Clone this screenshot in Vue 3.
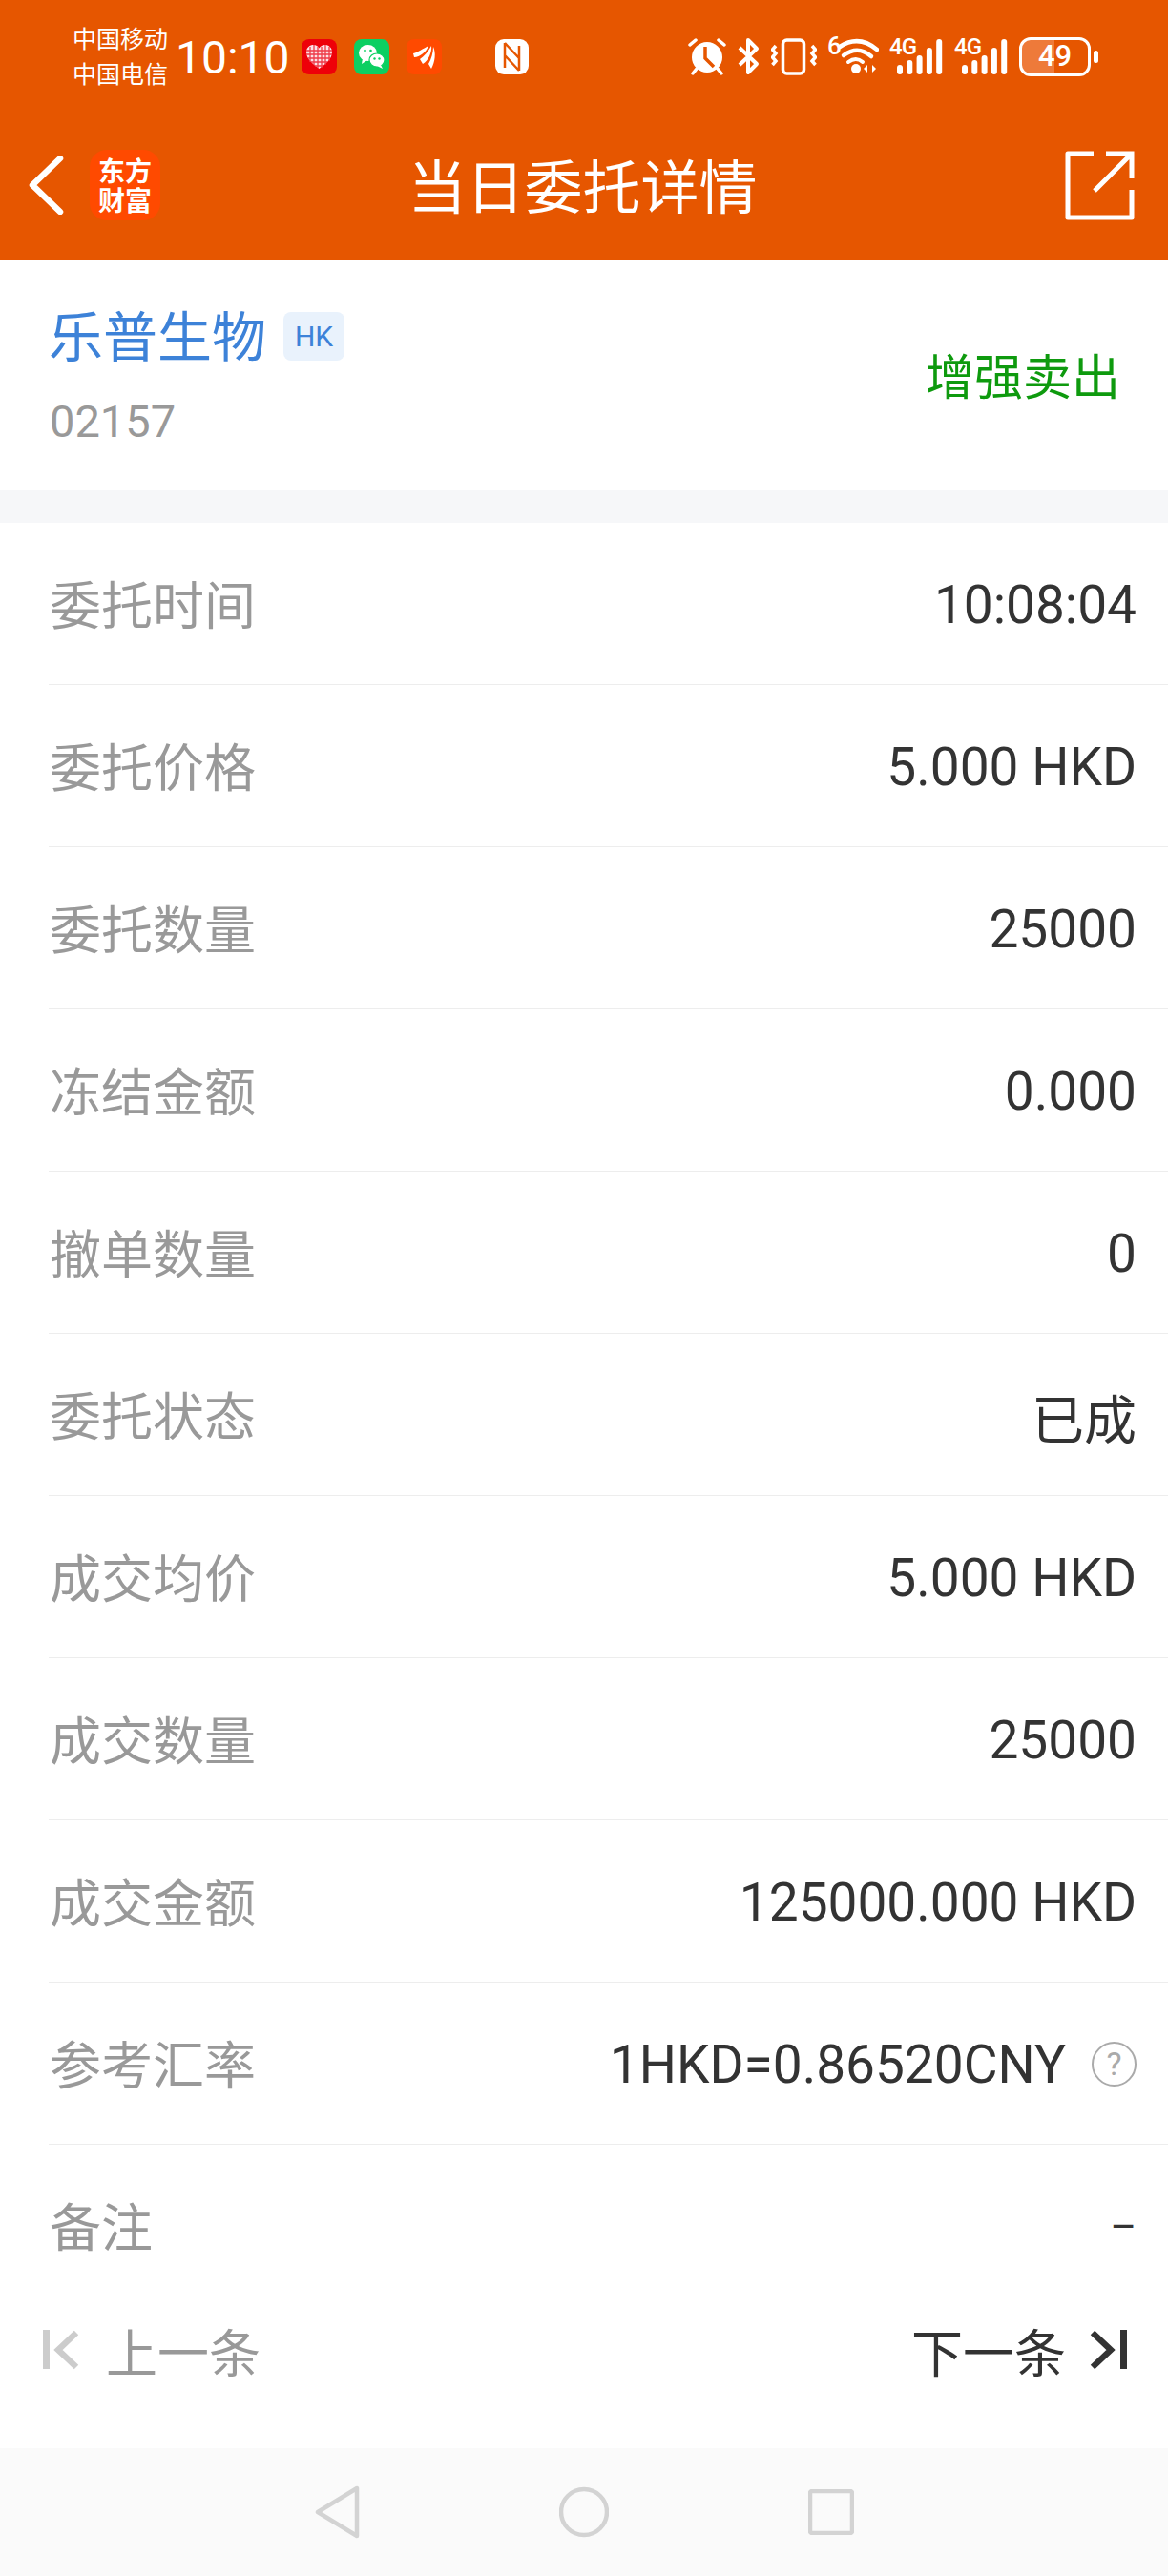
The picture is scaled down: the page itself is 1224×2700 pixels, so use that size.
<script setup>
const rows = [
  { label: '委托时间', value: '10:08:04' },
  { label: '委托价格', value: '5.000 HKD' },
  { label: '委托数量', value: '25000' },
  { label: '冻结金额', value: '0.000' },
  { label: '撤单数量', value: '0' },
  { label: '委托状态', value: '已成' },
  { label: '成交均价', value: '5.000 HKD' },
  { label: '成交数量', value: '25000' },
  { label: '成交金额', value: '125000.000 HKD' },
  { label: '参考汇率', value: '1HKD=0.86520CNY', help: true },
  { label: '备注', value: '–', dash: true }
]
const bars = [
  { x: 8, y: 29, h: 10 },
  { x: 18.3, y: 24, h: 15 },
  { x: 28.6, y: 19, h: 20 },
  { x: 38.9, y: 11, h: 28 },
  { x: 49.2, y: 2, h: 37 }
]
</script>

<template>
  <div class="page">
    <!-- 顶部橙色区域 -->
    <header class="top">
      <div class="status">
        <div class="carrier">
          <div>中国移动</div>
          <div>中国电信</div>
        </div>
        <div class="clock">10:10</div>

        <svg class="app-icon" width="37" height="37" viewBox="0 0 37 37">
          <rect width="37" height="37" rx="8" fill="#EE0009" />
          <path d="M18.5 31 C12 26 5 21 5 13.5 C5 8.5 9 6 12.5 6 C15 6 17.3 7.3 18.5 9.5 C19.7 7.3 22 6 24.500 6 C28 6 32 8.500 32 13.5 C32 21 25 26 18.5 31 Z" fill="#FBE3E6" />
          <path d="M9 8 L9 24 M13 6 L13 27 M17 8 L17 30 M21 8 L21 30 M25 6 L25 27 M29 8 L29 23 M5 12 L32 12 M5 16 L32 16 M7 20 L30 20 M10 24 L27 24 M14 28 L23 28" stroke="#EE3A48" stroke-width="1.3" fill="none" />
        </svg>

        <svg class="app-icon" width="37" height="37" viewBox="0 0 37 37">
          <rect width="37" height="37" rx="8" fill="#0CCF62" />
          <ellipse cx="14.500" cy="14.500" rx="9.500" ry="8.500" fill="#fff" />
          <path d="M9 20 L8 26 L14 22 Z" fill="#fff" />
          <ellipse cx="24" cy="22" rx="8" ry="7" fill="#fff" stroke="#0CCF62" stroke-width="1.2" />
          <path d="M28 27 L30 31 L24 28 Z" fill="#fff" />
          <circle cx="11.500" cy="12" r="1.300" fill="#0CCF62" />
          <circle cx="17.500" cy="12" r="1.300" fill="#0CCF62" />
          <circle cx="21.500" cy="20.500" r="1.200" fill="#0CCF62" />
          <circle cx="26.500" cy="20.500" r="1.200" fill="#0CCF62" />
        </svg>

        <svg class="app-icon" width="37" height="37" viewBox="0 0 37 37">
          <rect width="37" height="37" rx="8" fill="#FF4A00" />
          <path d="M7 15 C12 14 17 10 23 7 C21 13 14 19 8 19 Z" fill="#fff" />
          <path d="M14 21 C18 18 23 13 26 7 C27 13 23 23 17 26 Z" fill="#fff" />
          <path d="M23 26 C26 21 28 14 28 8 C31 14 30 24 26 31 Z" fill="#fff" />
        </svg>

        <svg class="nfc" width="35" height="37" viewBox="0 0 35 37">
          <rect width="35" height="37" rx="9" fill="#fff" />
          <path d="M10 4 V30 M25 7 V33 M10 4 L25 20 M10 17 L25 33" stroke="#E65600" stroke-width="2.500" fill="none" />
        </svg>

        <div class="status-right">
          <svg width="40" height="40" viewBox="0 0 40 40">
            <circle cx="20" cy="21" r="16" fill="#fff" />
            <path d="M18 10 L18 22 L27 31" stroke="#E65600" stroke-width="3.500" fill="none" />
            <path d="M2 8 L8 3 M32 3 L38 8 M9 33 L5 38 M31 33 L35 38" stroke="#fff" stroke-width="3.500" stroke-linecap="round" fill="none" />
          </svg>
          <svg width="25" height="40" viewBox="0 0 25 40">
            <path d="M3 11 L21 28 L12 37 V3 L21 12 L3 29" stroke="#fff" stroke-width="4" stroke-linejoin="round" fill="none" />
          </svg>
          <svg width="48" height="40" viewBox="0 0 48 40">
            <rect x="12.500" y="3" width="22" height="35" rx="4" stroke="#fff" stroke-width="3.500" fill="none" />
            <path d="M5 9 L1.500 13 L5 17 L1.500 21 L5 25 L1.500 29" stroke="#fff" stroke-width="3.500" fill="none" />
            <path d="M43 9 L46.500 13 L43 17 L46.500 21 L43 25 L46.500 29" stroke="#fff" stroke-width="3.500" fill="none" />
          </svg>
          <div class="net">
            <span class="net-label wifi-label">6</span>
            <svg width="54" height="40" viewBox="0 0 54 40">
              <path d="M13 10 Q33 -3 52 13" stroke="#fff" stroke-width="4.500" stroke-linecap="round" fill="none" />
              <path d="M17 19 Q32 8 46 20" stroke="#fff" stroke-width="4.500" stroke-linecap="round" fill="none" />
              <path d="M22 26 Q30 20 37 26" stroke="#fff" stroke-width="4" stroke-linecap="round" fill="none" />
              <circle cx="30" cy="33" r="5" fill="#fff" />
              <path d="M38 33 L42 29 V37 Z M47 29 L51 33 L47 37 Z" fill="#fff" />
            </svg>
          </div>
          <div v-for="n in 2" :key="n" class="net">
            <span class="net-label">4G</span>
            <svg width="57" height="40" viewBox="0 0 57 40">
              <rect v-for="b in bars" :key="b.x" :x="b.x" :y="b.y" width="6" :height="b.h" rx="3" fill="#fff" />
            </svg>
          </div>
          <div class="battery">
            <div class="battery-body">49</div>
            <div class="battery-nub"></div>
          </div>
        </div>
      </div>

      <div class="navbar">
        <div class="nav-side">
          <svg width="38" height="62" viewBox="0 0 38 62">
            <path d="M34 3 L5 31 L34 59" stroke="#fff" stroke-width="6.500" stroke-linecap="round" stroke-linejoin="round" fill="none" />
          </svg>
          <div class="logo">
            <div>东方</div>
            <div>财富</div>
          </div>
        </div>
        <div class="nav-title">当日委托详情</div>
        <div class="nav-side nav-side-right">
          <svg width="73" height="73" viewBox="0 0 73 73">
            <path d="M30 3 H3 V70 H70 V41" stroke="#fff" stroke-width="5" stroke-linejoin="round" fill="none" />
            <path d="M31 42 L70 3 M43 3 H70 V29" stroke="#fff" stroke-width="5" fill="none" />
          </svg>
        </div>
      </div>
    </header>

    <!-- 股票信息 -->
    <section class="stock">
      <div class="stock-left">
        <div class="stock-name-line">
          <span class="stock-name">乐普生物</span>
          <span class="market">HK</span>
        </div>
        <div class="stock-code">02157</div>
      </div>
      <div class="direction">增强卖出</div>
    </section>

    <div class="gap"></div>

    <!-- 委托明细 -->
    <main class="rows">
      <div v-for="row in rows" :key="row.label" class="row">
        <span class="row-label">{{ row.label }}</span>
        <span class="row-value" :class="{ 'row-dash': row.dash }">
          {{ row.value }}
          <span v-if="row.help" class="help">?</span>
        </span>
      </div>
    </main>

    <!-- 上一条 / 下一条 -->
    <div class="pager">
      <div class="pager-item pager-prev">
        <svg width="38" height="42" viewBox="0 0 38 42">
          <rect x="0" y="0" width="7" height="41" fill="#CCCCCC" />
          <path d="M35 3 L16 21 L35 39" stroke="#CCCCCC" stroke-width="6.500" fill="none" />
        </svg>
        <span>上一条</span>
      </div>
      <div class="pager-item pager-next">
        <span>下一条</span>
        <svg width="39" height="42" viewBox="0 0 39 42">
          <path d="M3 3 L22 21 L3 39" stroke="#333" stroke-width="6.500" fill="none" />
          <rect x="32" y="0" width="7" height="41" fill="#333" />
        </svg>
      </div>
    </div>

    <!-- 系统导航条 -->
    <footer class="sysnav">
      <svg width="47" height="56" viewBox="0 0 47 56">
        <path d="M44 3 V53 L3 28 Z" stroke="#D3D3D3" stroke-width="4.500" stroke-linejoin="round" fill="none" />
      </svg>
      <svg width="52" height="54" viewBox="0 0 52 54">
        <circle cx="26" cy="27" r="24" stroke="#D3D3D3" stroke-width="4.500" fill="none" />
      </svg>
      <svg width="48" height="48" viewBox="0 0 48 48">
        <rect x="2" y="2" width="44" height="44" rx="2" stroke="#D3D3D3" stroke-width="4.500" fill="none" />
      </svg>
    </footer>
  </div>
</template>

<style scoped>
.page {
  width: 1224px;
  height: 2700px;
  display: flex;
  flex-direction: column;
  background: #fff;
  color: #333;
  font-family: Roboto, "Noto Sans CJK SC", sans-serif;
  overflow: hidden;
}

.top { height: 272px; background: #E65600; color: #fff; flex-shrink: 0; }

.status { height: 118px; display: flex; align-items: center; padding: 0 73px 0 76px; box-sizing: border-box; }
.carrier { width: 108px; font-family: "Noto Sans CJK SC", sans-serif; font-size: 25px; line-height: 37px; margin-top: -2px; }
.clock { width: 132px; font-size: 48px; line-height: 56px; padding-top: 4px; }
.app-icon { margin-right: 18px; }
.nfc { margin-left: 38px; }
.status-right { margin-left: auto; display: flex; align-items: center; gap: 11px; }
.net { position: relative; height: 40px; }
.net svg { display: block; }
.net-label {
  position: absolute;
  left: 0;
  top: -2px;
  font-size: 24px;
  line-height: 24px;
  font-weight: 500;
  letter-spacing: -1px;
}
.wifi-label { font-size: 26px; top: -3px; }

.battery { display: flex; align-items: center; gap: 3px; }
.battery-body {
  width: 75px;
  height: 41px;
  box-sizing: border-box;
  border: 3.5px solid #fff;
  border-radius: 12px;
  background: linear-gradient(90deg, #EE7A3A 50%, transparent 50%);
  font-size: 31px;
  font-weight: 500;
  line-height: 34px;
  text-align: center;
}
.battery-nub { width: 5px; height: 13px; border-radius: 3px; background: #fff; }

.navbar { height: 154px; display: flex; align-items: center; padding-bottom: 2px; box-sizing: border-box; }
.nav-side { flex: 1; display: flex; align-items: center; padding-left: 29px; gap: 27px; }
.nav-side-right { justify-content: flex-end; padding: 0 35px 0 0; }
.logo {
  width: 74px;
  height: 74px;
  border-radius: 18px;
  background: #FF4A00;
  font-family: "Noto Sans CJK SC", sans-serif;
  font-size: 28px;
  font-weight: 700;
  line-height: 31px;
  text-align: center;
  padding-top: 6px;
  box-sizing: border-box;
}
.nav-title { font-family: "Noto Sans CJK SC", sans-serif; font-size: 61px; line-height: 80px; padding: 0 0 2px 3px; }

.stock {
  height: 242px;
  flex-shrink: 0;
  display: flex;
  align-items: center;
  justify-content: space-between;
  padding: 0 50px 0 51px;
  box-sizing: border-box;
}
.stock-name-line { display: flex; align-items: center; gap: 18px; height: 70px; padding-top: 3px; }
.stock-name { font-family: "Noto Sans CJK SC", sans-serif; font-size: 57px; color: #3D82D8; line-height: 70px; margin-top: -7px; }
.market {
  width: 64px;
  height: 51px;
  border-radius: 8px;
  background: #E9F2FC;
  color: #3D82D8;
  font-size: 30px;
  line-height: 51px;
  text-align: center;
}
.stock-code { margin-top: 24px; padding-left: 1px; font-size: 47px; line-height: 60px; color: #999; }
.direction { font-family: "Noto Sans CJK SC", sans-serif; font-size: 51px; color: #0E9A0E; padding-bottom: 3px; }

.gap { height: 34px; background: #F6F7F9; flex-shrink: 0; }

.rows { flex-shrink: 0; }
.row {
  height: 170px;
  margin-left: 51px;
  padding: 0 33px 0 1px;
  box-sizing: border-box;
  border-bottom: 1px solid #EDEDED;
  display: flex;
  align-items: center;
  justify-content: space-between;
}
.row:last-child { border-bottom: none; }
.row-label { font-family: "Noto Sans CJK SC", sans-serif; font-size: 54px; color: #999; padding-bottom: 3px; }
.row-value { display: flex; align-items: center; gap: 27px; font-size: 55px; color: #333; padding-top: 2px; font-weight: 400; }
.row-dash { font-size: 42px; }
.help {
  width: 47px;
  height: 47px;
  box-sizing: border-box;
  border: 2.5px solid #AAAAAA;
  border-radius: 50%;
  color: #AAAAAA;
  font-size: 34px;
  line-height: 42px;
  text-align: center;
}

.pager {
  height: 148px;
  flex-shrink: 0;
  padding: 0 43px 58px 45px;
  box-sizing: border-box;
  display: flex;
  align-items: center;
  justify-content: space-between;
  font-family: "Noto Sans CJK SC", sans-serif;
  font-size: 54px;
}
.pager-item { display: flex; align-items: center; }
.pager-prev { gap: 28px; color: #999; }
.pager-next { gap: 25px; color: #333; }

.sysnav {
  height: 134px;
  flex-shrink: 0;
  background: #FAFAFA;
  display: flex;
  align-items: center;
  justify-content: center;
  gap: 209px;
}
</style>

<style>
html, body { margin: 0; background: #fff; }
</style>
